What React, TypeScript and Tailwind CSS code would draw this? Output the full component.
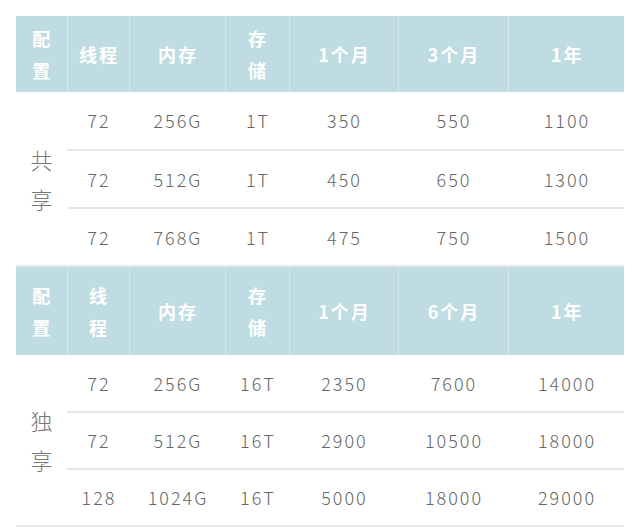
const cols = [51, 62, 96, 64, 109, 110, 116];

type Group = {
    label: string[];
    head: string[][];
    headH: string;
    rowH: string;
    rows: string[][];
};

const groups: Group[] = [
    {
        label: ["共", "享"],
        head: [["配", "置"], ["线程"], ["内存"], ["存", "储"], ["1个月"], ["3个月"], ["1年"]],
        headH: "h-[76px]",
        rowH: "h-[58px]",
        rows: [
            ["72", "256G", "1T", "350", "550", "1100"],
            ["72", "512G", "1T", "450", "650", "1300"],
            ["72", "768G", "1T", "475", "750", "1500"],
        ],
    },
    {
        label: ["独", "享"],
        head: [["配", "置"], ["线", "程"], ["内存"], ["存", "储"], ["1个月"], ["6个月"], ["1年"]],
        headH: "h-[89px]",
        rowH: "h-[57px]",
        rows: [
            ["72", "256G", "16T", "2350", "7600", "14000"],
            ["72", "512G", "16T", "2900", "10500", "18000"],
            ["128", "1024G", "16T", "5000", "18000", "29000"],
        ],
    },
];

export default function App() {
    return (
        <div className="w-[640px] h-[528px] bg-white pt-4 px-4 overflow-hidden"
            style={{ fontFamily: '"Noto Sans CJK SC", "Noto Sans", sans-serif' }}>
            <table className="w-[608px] table-fixed border-collapse">
                <colgroup>
                    {cols.map((w, i) => (
                        <col key={i} style={{ width: w }} />
                    ))}
                </colgroup>
                {groups.map((g, gi) => (
                    <tbody key={gi}>
                        {/* header row */}
                        <tr className={`${g.headH} bg-[#bfdce3]`}>
                            {g.head.map((lines, i) => (
                                <th key={i}
                                    className={`p-0 text-center text-[18px] leading-[32px] font-bold text-white tracking-[2px] ${i < g.head.length - 1 ? "border-r border-[#d4e8ed]" : ""}`}>
                                    {lines.map((l, k) => (
                                        <div key={k} className="pl-[2px]">{l}</div>
                                    ))}
                                </th>
                            ))}
                        </tr>
                        {g.rows.map((r, ri) => (
                            <tr key={ri} className={g.rowH}>
                                {ri === 0 && (
                                    <td rowSpan={3}
                                        className="p-0 text-center text-[22px] leading-[39px] font-light text-[#777] border-b-2 border-[#e6e6e6]">
                                        {g.label.map((c) => (
                                            <div key={c}>{c}</div>
                                        ))}
                                    </td>
                                )}
                                {r.map((v, ci) => (
                                    <td key={ci}
                                        className="p-0 pl-[2px] text-center text-[18px] font-light text-[#666] tracking-[2px] border-b-2 border-[#e6e6e6]">
                                        {v}
                                    </td>
                                ))}
                            </tr>
                        ))}
                    </tbody>
                ))}
            </table>
        </div>
    );
}
